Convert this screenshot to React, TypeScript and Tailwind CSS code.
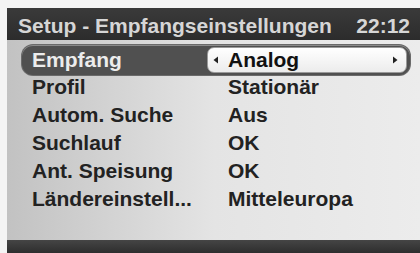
import React from "react";

const rows = [
  { label: "Profil", value: "Stationär" },
  { label: "Autom. Suche", value: "Aus" },
  { label: "Suchlauf", value: "OK" },
  { label: "Ant. Speisung", value: "OK" },
  { label: "Ländereinstell...", value: "Mitteleuropa" },
];

function Arrow({ dir }: { dir: "left" | "right" }) {
  return (
    <svg width="6" height="8" viewBox="0 0 6 8" className="shrink-0">
      {dir === "left" ? <path d="M5 0.5 L0.5 4 L5 7.5 Z" fill="#222" /> : <path d="M1 0.5 L5.5 4 L1 7.5 Z" fill="#222" />}
    </svg>
  );
}

export default function App() {
  return (
    <div className="w-[420px] h-[253px] bg-[#f4f4f4] pl-[7px] pt-[8px] overflow-hidden" style={{ fontFamily: '"Liberation Sans", Arial, sans-serif' }}>
      <div className="flex flex-col h-full">
        {/* title bar */}
        <div className="h-[32px] shrink-0 flex items-end justify-between pl-[11px] pr-[10px] pb-[4px] bg-gradient-to-b from-[#3a3a3a] to-[#2c2c2c] text-[#d6d6d6] text-[21px] font-bold leading-none">
          <span>Setup - Empfangseinstellungen</span>
          <span>22:12</span>
        </div>

        {/* content */}
        <div className="h-[200px] shrink-0 bg-gradient-to-r from-[#c2c2c2] via-[#e4e4e4] to-[#ececec] pt-[5px] text-[21px] font-bold text-[#222]">
          <div className="ml-[15px] mr-[10px] mb-[-2px] h-[30px] flex items-center rounded-[11px] bg-[#505050] shadow-[inset_0_1px_0_#8a8a8a,0_0_0_1px_#6a6a6a]">
            <span className="w-[185px] pl-[10px] leading-[28px] text-[#ececec]">Empfang</span>
            <div className="flex-1 mr-[3px] h-[26px] flex items-center rounded-[7px] bg-gradient-to-b from-[#ffffff] to-[#ececec] border border-[#9a9a9a] pl-[5px] pr-[8px]">
              <Arrow dir="left" />
              <span className="flex-1 pl-[9px] leading-[28px] text-[#111]">Analog</span>
              <Arrow dir="right" />
            </div>
          </div>
          {rows.map((r) => (
            <div key={r.label} className="flex h-[28px] leading-[28px] pl-[25px]">
              <span className="w-[196px]">{r.label}</span>
              <span>{r.value}</span>
            </div>
          ))}
        </div>

        {/* bottom bar */}
        <div className="flex-1 bg-gradient-to-b from-[#454545] to-[#2e2e2e]" />
      </div>
    </div>
  );
}
